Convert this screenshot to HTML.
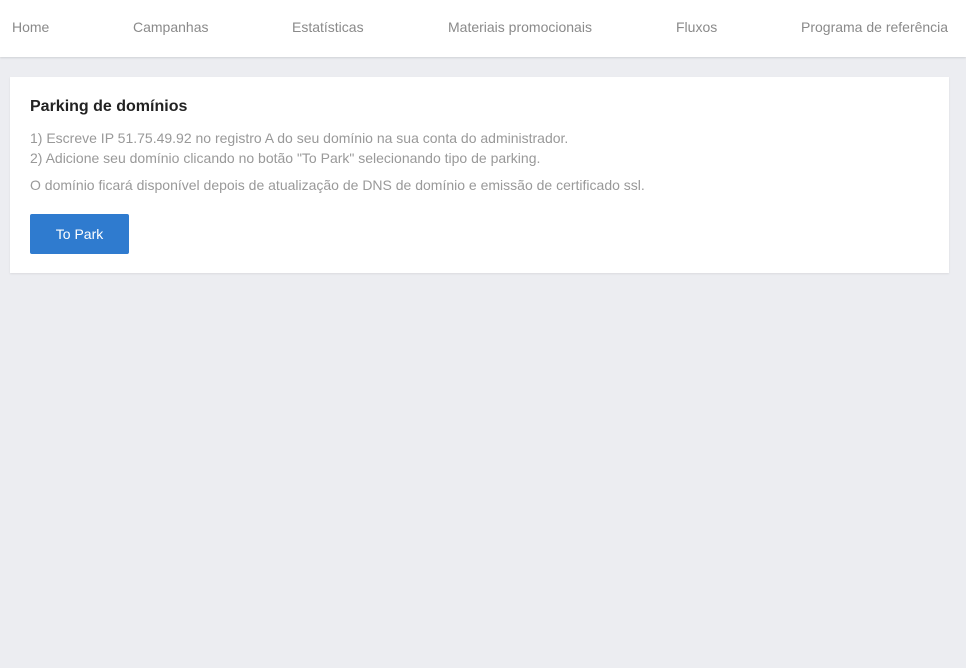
<!DOCTYPE html>
<html><head><meta charset="utf-8"><style>
html,body{margin:0;padding:0;}
body{width:966px;height:668px;background:#ecedf1;font-family:"Liberation Sans",Arial,sans-serif;position:relative;overflow:hidden;}
.nav{position:absolute;left:0;top:0;width:966px;height:57px;background:#fff;box-shadow:0 1px 2px rgba(0,0,0,0.12);}
.nav span{position:absolute;top:19px;font-size:14px;color:#8a8a8a;white-space:nowrap;}
.card{position:absolute;left:10px;top:77px;width:939px;height:196px;background:#fff;box-shadow:0 1px 2px rgba(0,0,0,0.08);}
h1{position:absolute;left:20px;top:21px;margin:0;font-size:16px;font-weight:bold;color:#222;}
.t{position:absolute;left:20px;font-size:14px;color:#999;white-space:nowrap;}
.btn{position:absolute;left:20px;top:137px;width:99px;height:40px;background:#2f7bcf;color:#fff;font-size:14px;line-height:40px;text-align:center;border-radius:2px;}
</style></head><body>
<div class="nav">
<span style="left:12px">Home</span>
<span style="left:133px">Campanhas</span>
<span style="left:292px">Estatísticas</span>
<span style="left:448px">Materiais promocionais</span>
<span style="left:676px">Fluxos</span>
<span style="left:801px">Programa de referência</span>
</div>
<div class="card">
<h1>Parking de domínios</h1>
<div class="t" style="top:53px">1) Escreve IP 51.75.49.92 no registro A do seu domínio na sua conta do administrador.</div>
<div class="t" style="top:73px">2) Adicione seu domínio clicando no botão "To Park" selecionando tipo de parking.</div>
<div class="t" style="top:100px">O domínio ficará disponível depois de atualização de DNS de domínio e emissão de certificado ssl.</div>
<div class="btn">To Park</div>
</div>
</body></html>
